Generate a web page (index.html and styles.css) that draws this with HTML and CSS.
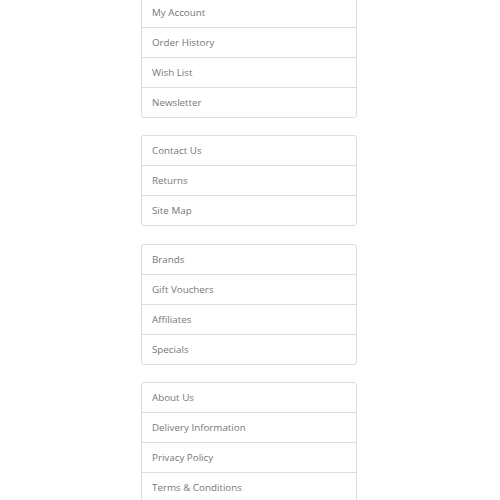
FILE: index.html
```html
<!DOCTYPE html>
<html>
<head>
<meta charset="utf-8">
<link rel="stylesheet" href="styles.css">
</head>
<body>
<div class="page">
  <div class="list-group">
    <a class="item">My Account</a>
    <a class="item">Order History</a>
    <a class="item">Wish List</a>
    <a class="item">Newsletter</a>
  </div>
  <div class="list-group">
    <a class="item">Contact Us</a>
    <a class="item">Returns</a>
    <a class="item">Site Map</a>
  </div>
  <div class="list-group">
    <a class="item">Brands</a>
    <a class="item">Gift Vouchers</a>
    <a class="item">Affiliates</a>
    <a class="item">Specials</a>
  </div>
  <div class="list-group">
    <a class="item">About Us</a>
    <a class="item">Delivery Information</a>
    <a class="item">Privacy Policy</a>
    <a class="item">Terms &amp; Conditions</a>
  </div>
</div>
</body>
</html>
```
FILE: styles.css
```css
html, body {
  margin: 0;
  padding: 0;
  background: #fff;
}
.page {
  width: 216px;
  margin: -3.3px 0 0 141px;
  display: flex;
  flex-direction: column;
  gap: 17.5px;
}
.list-group {
  border: 1px solid #ddd;
  border-radius: 3px;
  display: flex;
  flex-direction: column;
  background: #fff;
}
.item {
  display: flex;
  align-items: center;
  height: 29px;
  padding: 0 10px;
  font-family: "Open Sans", sans-serif;
  font-size: 9.8px;
  color: #777;
  text-decoration: none;
}
.item + .item {
  border-top: 1px solid #ddd;
}
```
